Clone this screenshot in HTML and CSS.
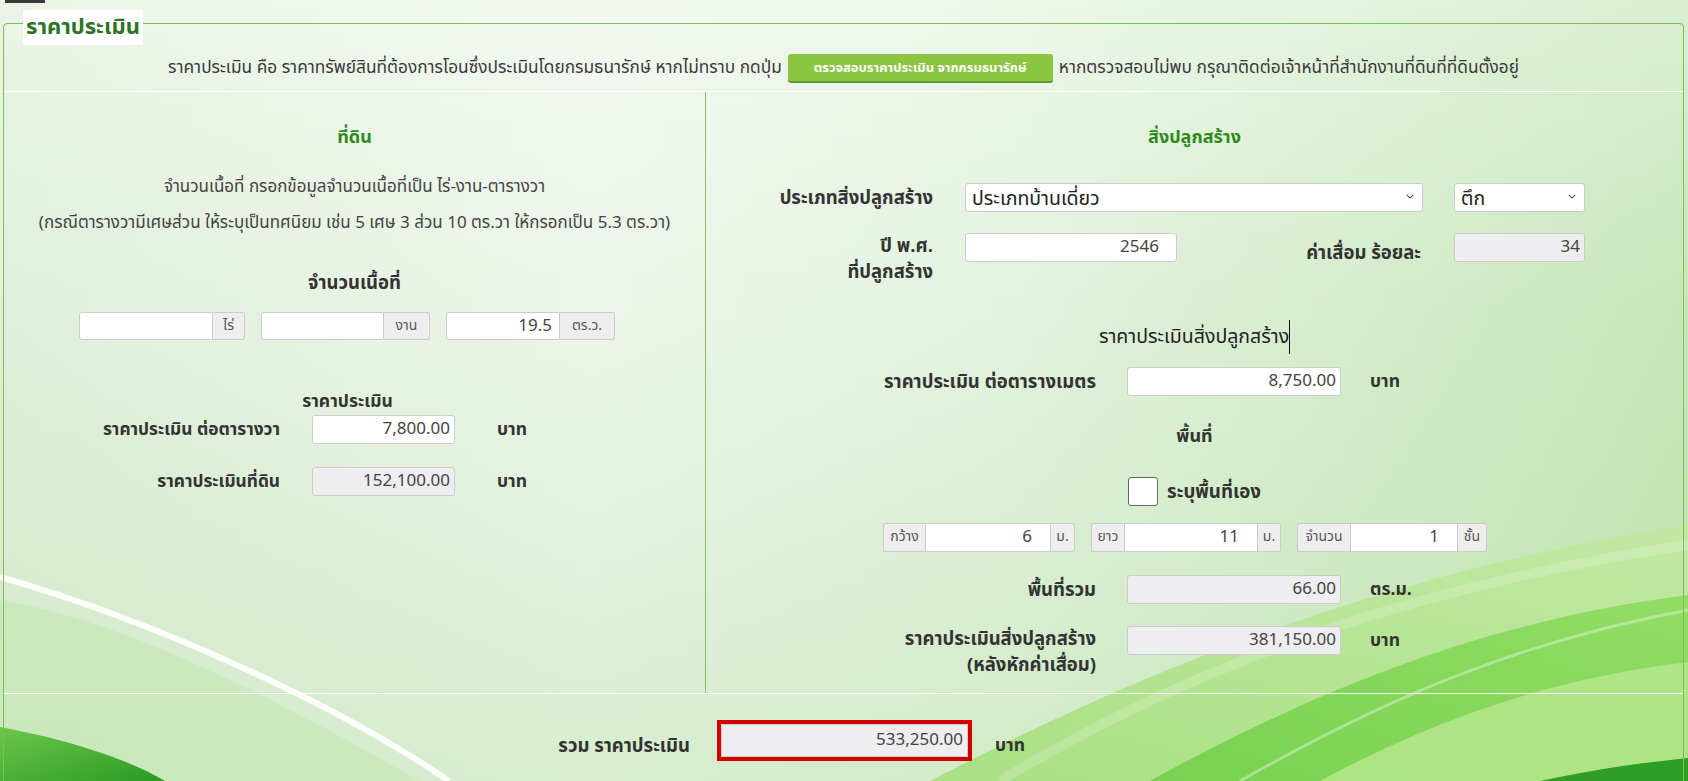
FILE: index.html
```html
<!DOCTYPE html>
<html lang="th">
<head>
<meta charset="utf-8">
<title>ราคาประเมิน</title>
<link rel="stylesheet" href="styles.css">
</head>
<body>
<svg class="bg" viewBox="0 0 1688 781" preserveAspectRatio="none" aria-hidden="true">
  <defs>
    <linearGradient id="g1" x1="0" y1="1" x2="1" y2="0">
      <stop offset="0" stop-color="#a6de7c"/>
      <stop offset="1" stop-color="#c2e9a2"/>
    </linearGradient>
    <linearGradient id="g2" x1="0" y1="1" x2="1" y2="0">
      <stop offset="0" stop-color="#6fcf46"/>
      <stop offset="1" stop-color="#8bdb5c"/>
    </linearGradient>
    <linearGradient id="g3" x1="0" y1="0" x2="1" y2="1">
      <stop offset="0" stop-color="#6cc64c"/>
      <stop offset="1" stop-color="#2a9a22"/>
    </linearGradient>
  </defs>
  <path d="M930 781 C1190 645 1430 565 1688 525 L1688 781 Z" fill="url(#g1)" opacity="0.9"/>
  <path d="M1150 781 C1360 665 1530 615 1688 595 L1688 781 Z" fill="url(#g2)" opacity="0.85"/>
  <path d="M1320 781 C1460 705 1580 675 1688 662 L1688 781 Z" fill="#b9e790" opacity="0.8"/>
  <path d="M1540 781 C1600 768 1650 762 1688 758 L1688 781 Z" fill="#2e9e24"/>
  <path d="M0 600 C120 620 260 690 420 781 L0 781 Z" fill="#c2e5b2" opacity="0.55"/>
  <path d="M0 727 C70 740 130 760 165 781 L0 781 Z" fill="url(#g3)"/>
  <path d="M0 577 C150 620 330 700 449 781" fill="none" stroke="#ffffff" stroke-width="6" opacity="0.9"/>
  <path d="M1000 781 C1200 660 1420 585 1688 545" fill="none" stroke="#ffffff" stroke-width="10" opacity="0.18"/>
  <path d="M1240 781 C1400 690 1530 640 1688 610" fill="none" stroke="#ffffff" stroke-width="3" opacity="0.35"/>
</svg>

<div class="topbar"></div>

<div class="panel">
  <div class="legend">ราคาประเมิน</div>

  <div class="intro">
    <span>ราคาประเมิน คือ ราคาทรัพย์สินที่ต้องการโอนซึ่งประเมินโดยกรมธนารักษ์ หากไม่ทราบ กดปุ่ม</span>
    <button class="btn" type="button">ตรวจสอบราคาประเมิน จากกรมธนารักษ์</button>
    <span>หากตรวจสอบไม่พบ กรุณาติดต่อเจ้าหน้าที่สำนักงานที่ดินที่ที่ดินตั้งอยู่</span>
  </div>

  <div class="cols">
    <section class="col-land">
      <h3 class="head">ที่ดิน</h3>
      <p class="note">จำนวนเนื้อที่ กรอกข้อมูลจำนวนเนื้อที่เป็น ไร่-งาน-ตารางวา<br>(กรณีตารางวามีเศษส่วน ให้ระบุเป็นทศนิยม เช่น 5 เศษ 3 ส่วน 10 ตร.วา ให้กรอกเป็น 5.3 ตร.วา)</p>
      <h4 class="sub">จำนวนเนื้อที่</h4>
      <div class="groups land-groups">
        <div class="group g-rai"><span class="field"></span><span class="addon">ไร่</span></div>
        <div class="group g-ngan"><span class="field"></span><span class="addon">งาน</span></div>
        <div class="group g-wa"><span class="field num-s">19.5</span><span class="addon">ตร.ว.</span></div>
      </div>
      <div class="mid-title">ราคาประเมิน</div>
      <div class="row land-row first">
        <label class="lbl">ราคาประเมิน ต่อตารางวา</label>
        <span class="input">7,800.00</span>
        <span class="unit">บาท</span>
      </div>
      <div class="row land-row second">
        <label class="lbl">ราคาประเมินที่ดิน</label>
        <span class="input disabled">152,100.00</span>
        <span class="unit">บาท</span>
      </div>
    </section>

    <section class="col-build">
      <h3 class="head">สิ่งปลูกสร้าง</h3>
      <div class="row type-row">
        <label class="lbl">ประเภทสิ่งปลูกสร้าง</label>
        <span class="select wide">ประเภทบ้านเดี่ยว<svg class="chev" viewBox="0 0 10 6"><path d="M1 1 L5 5 L9 1" fill="none" stroke="#444" stroke-width="1.3"/></svg></span>
        <span class="select small">ตึก<svg class="chev" viewBox="0 0 10 6"><path d="M1 1 L5 5 L9 1" fill="none" stroke="#444" stroke-width="1.3"/></svg></span>
      </div>
      <div class="row year-row">
        <label class="lbl two">ปี พ.ศ.<br>ที่ปลูกสร้าง</label>
        <span class="input year num">2546</span>
        <label class="lbl dep">ค่าเสื่อม ร้อยละ</label>
        <span class="input disabled pct">34</span>
      </div>
      <div class="cursor-title">ราคาประเมินสิ่งปลูกสร้าง<span class="caret"></span></div>
      <div class="row b-row price-row">
        <label class="lbl">ราคาประเมิน ต่อตารางเมตร</label>
        <span class="input">8,750.00</span>
        <span class="unit">บาท</span>
      </div>
      <h4 class="sub area-title">พื้นที่</h4>
      <div class="check-row">
        <span class="checkbox"></span>
        <span class="check-label">ระบุพื้นที่เอง</span>
      </div>
      <div class="groups b-groups">
        <div class="group g-w"><span class="addon">กว้าง</span><span class="field num">6</span><span class="addon">ม.</span></div>
        <div class="group g-l"><span class="addon">ยาว</span><span class="field num">11</span><span class="addon">ม.</span></div>
        <div class="group g-f"><span class="addon">จำนวน</span><span class="field num">1</span><span class="addon">ชั้น</span></div>
      </div>
      <div class="row b-row sum-row">
        <label class="lbl">พื้นที่รวม</label>
        <span class="input disabled">66.00</span>
        <span class="unit">ตร.ม.</span>
      </div>
      <div class="row b-row net-row">
        <label class="lbl two">ราคาประเมินสิ่งปลูกสร้าง<br>(หลังหักค่าเสื่อม)</label>
        <span class="input disabled">381,150.00</span>
        <span class="unit">บาท</span>
      </div>
    </section>
  </div>

  <div class="row total-row">
    <label class="lbl">รวม ราคาประเมิน</label>
    <span class="total-box"><span class="input disabled">533,250.00</span></span>
    <span class="unit">บาท</span>
  </div>
</div>
</body>
</html>
```

FILE: styles.css
```css
html, body {
  margin: 0;
  padding: 0;
}

body {
  position: relative;
  width: 1688px;
  height: 781px;
  overflow: hidden;
  font-family: Tahoma, "Noto Sans Thai", "Noto Sans Thai UI", "Noto Sans", sans-serif;
  font-size: 16px;
  color: #333;
  background:
    linear-gradient(to bottom, rgba(255,255,255,0.35) 0%, rgba(255,255,255,0) 40%, rgba(170,220,150,0.3) 100%),
    linear-gradient(to right, #e0efda 0%, #ecf5e9 35%, #e3f2de 60%, #c6e7b9 100%);
}

.bg {
  position: absolute;
  left: 0;
  top: 0;
  width: 1688px;
  height: 781px;
  z-index: 0;
}

.topbar {
  position: relative;
  z-index: 1;
  width: 40px;
  height: 3px;
  margin-left: 5px;
  background: #3a3a3a;
}

.panel {
  position: relative;
  z-index: 1;
  box-sizing: border-box;
  width: 1681px;
  height: 790px;
  margin: 20px 0 0 3px;
  border: 1px solid #7fbf52;
  border-radius: 4px;
}

.legend {
  position: absolute;
  top: -14px;
  left: 19px;
  height: 35px;
  padding: 0 3px;
  background: #fff;
  color: #2b7424;
  font-size: 22px;
  font-weight: bold;
  line-height: 35px;
}

.intro {
  height: 68px;
  box-sizing: border-box;
  padding-top: 22px;
  border-bottom: 1px solid rgba(255,255,255,0.9);
  display: flex;
  justify-content: center;
  align-items: center;
  gap: 6px;
  font-size: 17.3px;
  line-height: 29px;
  color: #3a3a3a;
}

.intro span {
  height: 29px;
}

.btn {
  width: 265px;
  height: 29px;
  padding: 0;
  border: 0;
  border-bottom: 2px solid #5f9a2c;
  border-radius: 3px;
  background: #8cc541;
  color: #fff;
  font-family: inherit;
  font-size: 13px;
  font-weight: bold;
}

.cols {
  display: flex;
  height: 601px;
  border-bottom: 1px solid rgba(255,255,255,0.9);
}

.col-land {
  width: 701px;
  border-right: 1px solid #86c063;
  display: flex;
  flex-direction: column;
  align-items: center;
}

.col-build {
  flex: 1;
  display: flex;
  flex-direction: column;
  align-items: center;
}

.head {
  margin: 34px 0 0;
  font-size: 18px;
  font-weight: bold;
  line-height: 24px;
  color: #2f8a1e;
}

.note {
  margin: 19px 0 0;
  text-align: center;
  line-height: 36px;
  font-size: 17px;
  color: #444;
}

.sub {
  margin: 30px 0 0;
  font-size: 18.5px;
  font-weight: bold;
  line-height: 24px;
}

.groups {
  display: flex;
  align-self: stretch;
}

.group {
  display: flex;
  height: 28px;
}

.field {
  box-sizing: border-box;
  height: 100%;
  background: #fff;
  border: 1px solid #ccc;
  border-radius: 3px 0 0 3px;
  text-align: right;
  padding-right: 7px;
  line-height: 26px;
  font-size: 17px;
  color: #444;
}

.addon {
  box-sizing: border-box;
  height: 100%;
  background: #eee;
  border: 1px solid #ccc;
  border-left: 0;
  border-radius: 0 3px 3px 0;
  text-align: center;
  line-height: 26px;
  font-size: 14px;
  color: #555;
}

.land-groups {
  margin-top: 17px;
  padding-left: 75px;
  gap: 16px;
}

.g-rai .field { width: 134px; }
.g-rai .addon { width: 32px; }
.g-ngan .field { width: 123px; }
.g-ngan .addon { width: 46px; }
.g-wa .field { width: 114px; }
.g-wa .addon { width: 55px; }

.mid-title {
  margin-top: 51px;
  margin-right: 14px;
  font-weight: bold;
  font-size: 17.5px;
  line-height: 22px;
}

.row {
  display: flex;
  align-self: stretch;
  align-items: center;
}

.lbl {
  box-sizing: border-box;
  text-align: right;
  font-weight: bold;
  line-height: 26px;
}

.col-land .lbl {
  font-size: 17.3px;
}

.col-build .lbl,
.total-row .lbl {
  font-size: 18.5px;
}

.input {
  box-sizing: border-box;
  height: 29px;
  background: #fff;
  border: 1px solid #ccc;
  border-radius: 3px;
  text-align: right;
  padding-right: 4px;
  line-height: 27px;
  font-size: 17px;
  color: #444;
}

.input.disabled {
  background: #eeedef;
}

.input.num {
  padding-right: 17px;
}

.unit {
  font-weight: bold;
  font-size: 17.5px;
}

.land-row .lbl { width: 276px; }
.land-row .input { width: 143px; margin-left: 32px; }
.land-row .unit { margin-left: 42px; }
.land-row.first { margin-top: 2px; }
.land-row.second { margin-top: 23px; }

.type-row {
  margin-top: 33px;
}

.type-row .lbl { width: 227px; }

.select {
  position: relative;
  box-sizing: border-box;
  height: 29px;
  background: #fff;
  border: 1px solid #ccc;
  border-radius: 3px;
  padding-left: 6px;
  line-height: 31px;
  font-size: 19.5px;
  color: #222;
}

.select.wide { width: 458px; margin-left: 32px; }
.select.small { width: 131px; margin-left: 31px; }

.chev {
  position: absolute;
  right: 8px;
  top: 10px;
  width: 8px;
  height: 5px;
}

.year-row {
  margin-top: 21px;
  align-items: flex-start;
}

.year-row .lbl.two { width: 227px; }
.year-row .year { width: 212px; margin-left: 32px; }
.year-row .dep { width: 244px; padding-top: 7px; }
.year-row .pct { width: 131px; margin-left: 33px; }

.cursor-title {
  margin-top: 35px;
  line-height: 34px;
  font-size: 19.5px;
  color: #222;
  display: flex;
  align-items: center;
}

.caret {
  display: inline-block;
  width: 1px;
  height: 34px;
  background: #111;
}

.b-row .lbl { width: 390px; }
.b-row .input { width: 214px; margin-left: 31px; }
.b-row .unit { margin-left: 29px; }

.price-row { margin-top: 13px; }

.area-title {
  margin-top: 29px;
  font-size: 18px;
}

.check-row {
  margin-top: 28px;
  display: flex;
  align-items: center;
  height: 29px;
  gap: 9px;
}

.checkbox {
  box-sizing: border-box;
  width: 30px;
  height: 29px;
  background: #fff;
  border: 1px solid #666;
  border-radius: 3px;
}

.check-label {
  font-weight: bold;
  font-size: 18.7px;
}

.b-groups {
  margin-top: 17px;
  padding-left: 177px;
  gap: 16px;
}

.b-groups .group { height: 29px; }
.b-groups .addon:first-child {
  border-left: 1px solid #ccc;
  border-right: 0;
  border-radius: 3px 0 0 3px;
}
.b-groups .field { border-radius: 0; }
.b-groups .field.num { padding-right: 18px; }

.g-w .addon:first-child { width: 42px; }
.g-w .field { width: 126px; }
.g-w .addon:last-child { width: 24px; }
.g-l .addon:first-child { width: 33px; }
.g-l .field { width: 134px; }
.g-l .addon:last-child { width: 23px; }
.g-f .addon:first-child { width: 53px; }
.g-f .field { width: 108px; }
.g-f .addon:last-child { width: 29px; }

.sum-row { margin-top: 23px; }
.net-row { margin-top: 22px; align-items: flex-start; }
.net-row .unit { align-self: center; margin-top: -24px; }

.total-row {
  margin-top: 26px;
  align-items: flex-start;
}

.total-row .lbl {
  width: 686px;
  padding-top: 14px;
  line-height: 24px;
}

.total-box {
  box-sizing: border-box;
  width: 255px;
  height: 41px;
  margin-left: 27px;
  border: 4px solid #d40000;
  display: flex;
}

.total-box .input {
  width: 100%;
  height: 100%;
  line-height: 31px;
  border-radius: 2px;
}

.total-row .unit {
  margin-left: 23px;
  padding-top: 14px;
  line-height: 24px;
}
```
